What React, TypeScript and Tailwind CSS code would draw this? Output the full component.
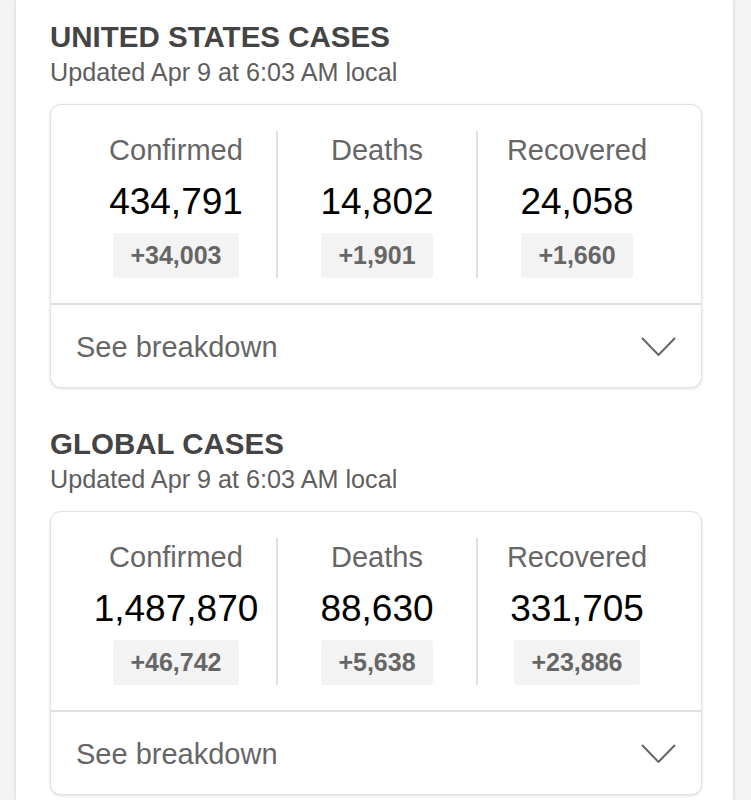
import React from "react";

type Stat = { label: string; value: string; delta: string };

const sections: { title: string; stats: Stat[] }[] = [
  {
    title: "UNITED STATES CASES",
    stats: [
      { label: "Confirmed", value: "434,791", delta: "+34,003" },
      { label: "Deaths", value: "14,802", delta: "+1,901" },
      { label: "Recovered", value: "24,058", delta: "+1,660" },
    ],
  },
  {
    title: "GLOBAL CASES",
    stats: [
      { label: "Confirmed", value: "1,487,870", delta: "+46,742" },
      { label: "Deaths", value: "88,630", delta: "+5,638" },
      { label: "Recovered", value: "331,705", delta: "+23,886" },
    ],
  },
];

function Chevron() {
  return (
    <svg width="35" height="19" viewBox="0 0 35 19" fill="none" className="mt-[1px]">
      <polyline points="1,1 17.5,18 34,1" stroke="#666" strokeWidth="2" />
    </svg>
  );
}

function Section({ title, stats }: { title: string; stats: Stat[] }) {
  return (
    <section>
      <h2 className="text-[29.5px] leading-[29px] font-bold text-[#444]">{title}</h2>
      <div className="mt-[9px] text-[25.2px] leading-[25px] text-[#5e5e5e]">
        Updated Apr 9 at 6:03 AM local
      </div>
      <div className="mt-[19px] rounded-[11px] border border-[#e3e3e3] bg-white shadow-[0_1px_3px_rgba(0,0,0,0.14)]">
        <div className="px-[25px] pt-[26px] pb-[25px] grid grid-cols-3">
          {stats.map((s, i) => (
            <div
              key={s.label}
              className={
                "flex flex-col items-center " +
                (i > 0 ? "border-l-2 border-[#e0e0e0]" : "")
              }
            >
              <div className="text-[29px] leading-[38px] text-[#666]">{s.label}</div>
              <div className="mt-[11px] text-[37px] leading-[44px] text-black">{s.value}</div>
              <div className="mt-[9px] h-[45px] px-[17px] rounded-[3px] bg-[#f3f3f3] text-[25px] leading-[45px] font-bold text-[#666]">
                {s.delta}
              </div>
            </div>
          ))}
        </div>
        <div className="border-t-2 border-[#e0e0e0] h-[84px] px-[25px] flex items-center justify-between">
          <span className="mt-[3px] text-[29px] text-[#666]">See breakdown</span>
          <Chevron />
        </div>
      </div>
    </section>
  );
}

export default function App() {
  return (
    <div
      className="min-h-[800px] bg-[#f3f3f3] pl-[16px] pr-[18px]"
      style={{ fontFamily: '"Liberation Sans", Arial, sans-serif' }}
    >
      <div className="min-h-[800px] bg-white shadow-[0_0_4px_rgba(0,0,0,0.16)] pl-[34px] pr-[31px] pt-[22px] flex flex-col gap-[41px]">
        {sections.map((s) => (
          <Section key={s.title} title={s.title} stats={s.stats} />
        ))}
      </div>
    </div>
  );
}
